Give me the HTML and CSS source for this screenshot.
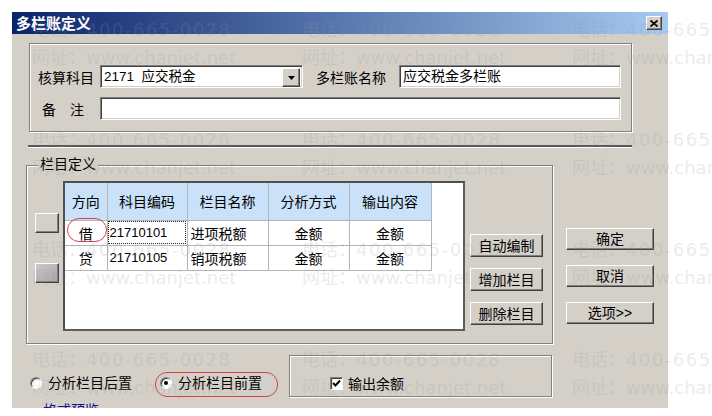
FILE: index.html
```html
<!DOCTYPE html>
<html lang="zh-CN">
<head>
    <meta charset="UTF-8">
    <title>多栏账定义</title>
    <link rel="stylesheet" href="styles.css">
</head>
<body>

    <div class="dialog">
        <!-- Title bar -->
        <div class="titlebar">
            <span class="title">多栏账定义</span>
            <span class="close-btn">
                <svg width="8" height="7" viewBox="0 0 8 7"><path d="M0.5 0.5 L7.5 6.5 M7.5 0.5 L0.5 6.5" stroke="#000" stroke-width="1.8" fill="none"/></svg>
            </span>
        </div>

        <!-- Account / name / memo -->
        <div class="group top-group">
            <div class="form-row">
                <span class="label">核算科目</span>
                <div class="sunken combo">
                    <span class="combo-text">2171&nbsp; 应交税金</span>
                    <span class="raised combo-btn">
                        <svg width="7" height="4" viewBox="0 0 7 4"><path d="M0 0 H7 L3.5 4 Z" fill="#000"/></svg>
                    </span>
                </div>
                <span class="label name-label">多栏账名称</span>
                <div class="sunken textbox name-box">应交税金多栏账</div>
            </div>
            <div class="form-row">
                <span class="label memo-label"><span>备</span><span>注</span></span>
                <div class="sunken textbox memo-box"></div>
            </div>
        </div>

        <div class="separator"></div>

        <!-- Column definition -->
        <div class="middle">
            <div class="group column-group">
                <div class="group-title">栏目定义</div>
                <div class="column-inner">
                    <div class="row-buttons">
                        <span class="raised sq-btn"></span>
                        <span class="raised sq-btn sq-btn-dark"></span>
                    </div>
                    <div class="grid">
                        <table class="columns">
                            <colgroup>
                                <col style="width:42px">
                                <col style="width:80px">
                                <col style="width:81px">
                                <col style="width:81px">
                                <col style="width:82px">
                            </colgroup>
                            <tr class="head">
                                <th>方向</th>
                                <th>科目编码</th>
                                <th>栏目名称</th>
                                <th>分析方式</th>
                                <th>输出内容</th>
                            </tr>
                            <tr>
                                <td class="center">借</td>
                                <td class="code focused">21710101</td>
                                <td>进项税额</td>
                                <td class="center">金额</td>
                                <td class="center">金额</td>
                            </tr>
                            <tr>
                                <td class="center">贷</td>
                                <td class="code">21710105</td>
                                <td>销项税额</td>
                                <td class="center">金额</td>
                                <td class="center">金额</td>
                            </tr>
                        </table>
                        <span class="mark mark-debit"></span>
                    </div>
                    <div class="side-buttons">
                        <span class="raised btn">自动编制</span>
                        <span class="raised btn">增加栏目</span>
                        <span class="raised btn">删除栏目</span>
                    </div>
                </div>
            </div>
            <div class="main-buttons">
                <span class="raised btn">确定</span>
                <span class="raised btn">取消</span>
                <span class="raised btn">选项&gt;&gt;</span>
            </div>
        </div>

        <!-- Options -->
        <div class="bottom">
            <label class="radio"><span class="radio-dot"></span>分析栏目后置</label>
            <label class="radio radio-front"><span class="radio-dot checked"></span>分析栏目前置<span class="mark mark-radio"></span></label>
            <div class="group check-frame">
                <span class="checkbox">
                    <svg width="9" height="9" viewBox="0 0 9 9"><path d="M1 4 L3.5 6.5 L8 1.5" stroke="#000" stroke-width="2" fill="none"/></svg>
                </span>
                输出余额
            </div>
        </div>
        <a class="preview-link">格式预览</a>
    </div>

    <!-- Watermark -->
    <div class="watermark">
        <div>电话：<span class="phone">400-665-0028</span><br>网址：www.chanjet.net</div>
        <div>电话：<span class="phone">400-665-0028</span><br>网址：www.chanjet.net</div>
        <div>电话：<span class="phone">400-665-0028</span><br>网址：www.chanjet.net</div>
        <div>电话：<span class="phone">400-665-0028</span><br>网址：www.chanjet.net</div>
        <div>电话：<span class="phone">400-665-0028</span><br>网址：www.chanjet.net</div>
        <div>电话：<span class="phone">400-665-0028</span><br>网址：www.chanjet.net</div>
        <div>电话：<span class="phone">400-665-0028</span><br>网址：www.chanjet.net</div>
        <div>电话：<span class="phone">400-665-0028</span><br>网址：www.chanjet.net</div>
        <div>电话：<span class="phone">400-665-0028</span><br>网址：www.chanjet.net</div>
        <div>电话：<span class="phone">400-665-0028</span><br>网址：www.chanjet.net</div>
        <div>电话：<span class="phone">400-665-0028</span><br>网址：www.chanjet.net</div>
        <div>电话：<span class="phone">400-665-0028</span><br>网址：www.chanjet.net</div>
    </div>

</body>
</html>
```

FILE: styles.css
```css
/* Global */
* {
    box-sizing: border-box;
}

body {
    margin: 0;
    width: 712px;
    height: 416px;
    overflow: hidden;
    position: relative;
    background: #fff;
    font-family: "Liberation Sans", "Noto Sans CJK SC", sans-serif;
    font-size: 14px;
    color: #000;
}

.dialog {
    margin: 12px 0 0 12px;
    width: 656px;
    height: 396px;
    background: #d4d0c8;
    overflow: hidden;
}

/* Title bar */
.titlebar {
    height: 22px;
    display: flex;
    align-items: center;
    justify-content: space-between;
    padding: 0 6px 0 4px;
    background: linear-gradient(90deg, #0a246a, #a6caf0);
}

.title {
    color: #fff;
    font-family: "Noto Sans CJK SC", sans-serif;
    font-weight: bold;
    font-size: 15px;
    line-height: 22px;
}

.close-btn {
    width: 16px;
    height: 14px;
    display: flex;
    align-items: center;
    justify-content: center;
    background: #d4d0c8;
    border: 1px solid;
    border-color: #fff #404040 #404040 #fff;
    box-shadow: inset -1px -1px 0 #808080;
}

/* Shared 3D borders */
.group {
    border: 1px solid #808080;
    box-shadow: inset 1px 1px 0 #fff, 1px 1px 0 #fff;
}

.sunken {
    background: #fff;
    border: 1px solid;
    border-color: #808080 #fff #fff #808080;
    box-shadow: inset 1px 1px 0 #404040, inset -1px -1px 0 #d4d0c8;
}

.raised {
    background: #d4d0c8;
    border: 1px solid;
    border-color: #fff #404040 #404040 #fff;
    box-shadow: inset -1px -1px 0 #808080;
}

/* Top group */
.top-group {
    margin: 9px 0 0 17px;
    width: 603px;
    height: 89px;
    padding: 21px 0 0 8px;
}

.form-row {
    display: flex;
    align-items: center;
    height: 23px;
}

.form-row + .form-row {
    margin-top: 9px;
}

.label {
    width: 56px;
    margin-right: 6px;
    white-space: nowrap;
}

.name-label {
    width: auto;
    margin: 0 13px;
}

.memo-label {
    display: flex;
    gap: 14px;
    padding-left: 4px;
}

.textbox {
    height: 23px;
    padding: 2px 3px;
    line-height: 17px;
}

.name-box {
    width: 222px;
}

.memo-box {
    width: 521px;
}

.combo {
    width: 203px;
    height: 23px;
    display: flex;
    padding: 2px;
}

.combo-text {
    flex: 1;
    padding-left: 1px;
    line-height: 17px;
    font-size: 13.5px;
}

.combo-btn {
    width: 18px;
    height: 19px;
    display: flex;
    align-items: center;
    justify-content: center;
}

.separator {
    margin: 13px 0 0 16px;
    width: 604px;
    height: 3px;
    border-top: 2px solid #585858;
    border-bottom: 1px solid #fff;
}

/* Column definition */
.middle {
    display: flex;
    align-items: flex-start;
    margin-top: 17px;
}

.column-group {
    margin-left: 14px;
    width: 527px;
    padding: 0 9px 12px 8px;
}

.group-title {
    width: fit-content;
    margin: -10px 0 0 3px;
    padding: 0 2px;
    background: #d4d0c8;
    line-height: 16px;
}

.column-inner {
    display: flex;
    align-items: flex-start;
    margin-top: 9px;
}

.row-buttons {
    width: 24px;
    display: flex;
    flex-direction: column;
    gap: 30px;
    padding-top: 32px;
}

.sq-btn {
    height: 20px;
}

.sq-btn-dark {
    background: linear-gradient(135deg, #c8c8c8, #a8a8a8);
}

.grid {
    position: relative;
    margin-left: 4px;
    width: 402px;
    height: 150px;
    background: #fff;
    border: 2px solid;
    border-color: #505050 #5c5c5c #5c5c5c #505050;
}

.columns {
    border-collapse: collapse;
    table-layout: fixed;
    width: 366px;
    border-right: 1px solid #404040;
    border-bottom: 1px solid #404040;
}

.columns th,
.columns td {
    border: 1px solid #b4b4b4;
    padding: 0 3px;
    font-weight: normal;
    white-space: nowrap;
}

.columns tr > :first-child {
    border-left: none;
}

.columns .head th {
    border-top: none;
    height: 37px;
    background: #c9e2fa;
    text-align: center;
}

.columns td {
    height: 25px;
}

.columns .center {
    text-align: center;
}

.columns .code {
    padding-left: 2px;
    font-size: 13px;
}

.columns .focused {
    outline: 1px dotted #222;
    outline-offset: -2px;
}

.mark {
    position: absolute;
    border: 1.5px solid #d6404e;
    border-radius: 12px;
}

.mark-debit {
    left: 2px;
    top: 35px;
    width: 40px;
    height: 24px;
}

.side-buttons {
    margin-left: 5px;
    width: 73px;
    display: flex;
    flex-direction: column;
    gap: 11px;
    padding-top: 53px;
}

.side-buttons .btn {
    height: 23px;
}

.main-buttons {
    margin-left: 13px;
    width: 88px;
    display: flex;
    flex-direction: column;
    gap: 15px;
    padding-top: 63px;
}

.btn {
    height: 22px;
    display: flex;
    align-items: center;
    justify-content: center;
    line-height: 16px;
}

/* Options */
.bottom {
    display: flex;
    align-items: flex-start;
    margin-top: 11px;
    height: 42px;
    padding-left: 18px;
}

.radio {
    position: relative;
    display: flex;
    align-items: center;
    gap: 6px;
    height: 16px;
    margin-top: 20px;
    line-height: 16px;
}

.radio-front {
    margin-left: 28px;
}

.radio-dot {
    position: relative;
    width: 12px;
    height: 12px;
    border-radius: 50%;
    background: #fff;
    border: 1px solid;
    border-color: #808080 #fff #fff #808080;
    box-shadow: inset 1px 1px 0 #404040;
}

.radio-dot.checked::after {
    content: "";
    position: absolute;
    left: 3px;
    top: 3px;
    width: 4px;
    height: 4px;
    border-radius: 50%;
    background: #000;
}

.mark-radio {
    left: -5px;
    top: -3px;
    width: 123px;
    height: 25px;
}

.check-frame {
    margin-left: 27px;
    width: 263px;
    height: 42px;
    display: flex;
    align-items: center;
    gap: 5px;
    padding: 14px 0 0 40px;
}

.checkbox {
    width: 13px;
    height: 13px;
    display: flex;
    align-items: center;
    justify-content: center;
    background: #fff;
    border: 1px solid;
    border-color: #808080 #fff #fff #808080;
    box-shadow: inset 1px 1px 0 #404040;
}

.preview-link {
    display: block;
    width: fit-content;
    margin: 5px 0 0 31px;
    color: #10109a;
    text-decoration: underline;
    line-height: 16px;
}

/* Watermark */
.watermark {
    position: absolute;
    top: 0;
    left: 0;
    width: 712px;
    height: 416px;
    overflow: hidden;
    pointer-events: none;
    display: grid;
    grid-template-columns: repeat(3, 270px);
    grid-auto-rows: 110px;
    padding: 16px 0 0 32px;
    font-family: "DejaVu Sans", "Noto Sans CJK SC", sans-serif;
    font-size: 18px;
    line-height: 28px;
    color: rgba(150, 150, 150, 0.2);
    white-space: nowrap;
}

.phone {
    letter-spacing: 1.5px;
}
```
